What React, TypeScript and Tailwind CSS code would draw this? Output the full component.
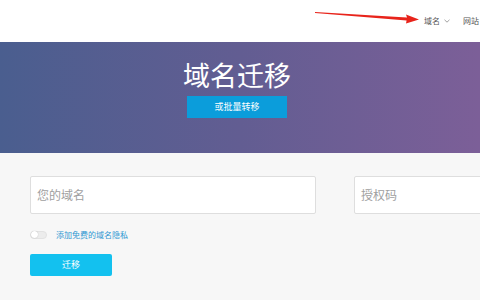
import React from 'react';

const App: React.FC = () => {
  return (
    <div className="w-[480px] h-[300px] overflow-hidden bg-[#f7f7f7] font-['Noto_Sans_CJK_SC','Noto_Sans',sans-serif]">
      {/* top bar */}
      <header className="relative h-[42px] bg-white flex items-center justify-end pr-[1px] text-[8px] text-[#555]">
        <svg className="absolute left-[312px] top-[8px]" width="110" height="18" viewBox="0 0 110 18">
          <path d="M3 4 L95 9.6 L94 6.5 L107 11.5 L94 15.5 L94.6 12.6 L3 5 Z" fill="#e8241b" />
        </svg>
        <div className="flex items-center gap-[4px] mr-[13px]">
          <span>域名</span>
          <svg width="6" height="4" viewBox="0 0 6 4">
            <path d="M0.5 0.8 L3 3.2 L5.5 0.8" fill="none" stroke="#888" strokeWidth="0.8" />
          </svg>
        </div>
        <span className="whitespace-nowrap">网站</span>
      </header>

      {/* banner */}
      <section className="h-[111px] bg-gradient-to-r from-[#4a5e8f] via-[#625d92] to-[#7c5f98] flex flex-col items-center pt-[18px] pr-[6px]">
        <h1 className="text-white text-[27px] leading-[30px]">域名迁移</h1>
        <button className="mt-[6px] w-[100px] h-[22px] bg-[#0b9ddb] text-white text-[9px]">或批量转移</button>
      </section>

      {/* form */}
      <main className="pl-[30px] pt-[23px]">
        <div className="flex gap-[38px]">
          <div className="w-[286px] h-[38px] shrink-0 bg-white border border-[#dedede] rounded-[2px] flex items-center pl-[6px] text-[12px] text-[#a0a0a0]">
            您的域名
          </div>
          <div className="w-[200px] h-[38px] shrink-0 bg-white border border-[#dedede] rounded-[2px] flex items-center pl-[6px] text-[12px] text-[#a0a0a0]">
            授权码
          </div>
        </div>
        <div className="flex items-center mt-[16px] h-[9px]">
          <div className="w-[17px] h-[8px] rounded-full bg-[#ececec] border border-[#e2e2e2] flex items-center">
            <div className="w-[7px] h-[7px] rounded-full bg-white shadow-[0_0_1px_rgba(0,0,0,0.3)]" />
          </div>
          <span className="ml-[9px] text-[8px] text-[#2f97d2]">添加免费的域名隐私</span>
        </div>
        <button className="mt-[15px] w-[82px] h-[22px] rounded-[2px] bg-[#13c1ef] text-white text-[9px]">迁移</button>
      </main>
    </div>
  );
};

export default App;
